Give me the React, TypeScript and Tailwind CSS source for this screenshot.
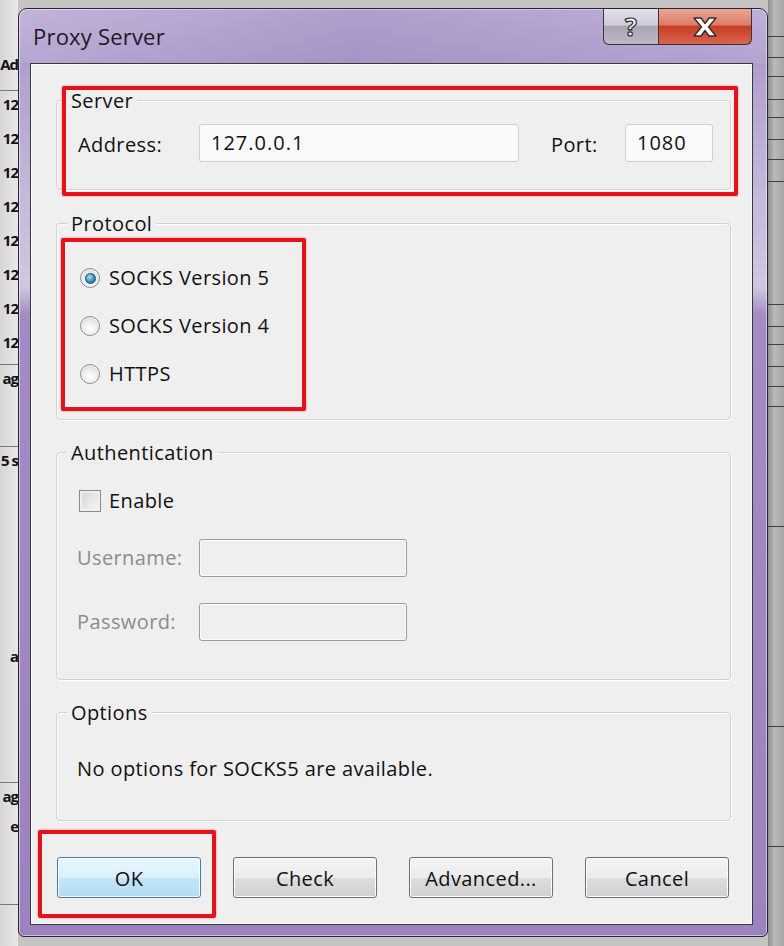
import type { ReactNode } from 'react';

const leftRows = [
  { h: 51, t: '' },
  { h: 40, t: 'Ad', line: true },
  { h: 34, t: '12' },
  { h: 34, t: '12' },
  { h: 34, t: '12' },
  { h: 34, t: '12' },
  { h: 34, t: '12' },
  { h: 34, t: '12' },
  { h: 34, t: '12' },
  { h: 36, t: '12', line: true },
  { h: 82, t: 'ag', line: true },
  { h: 196, t: '5 s' },
  { h: 140, t: 'a', line: true },
  { h: 30, t: 'ag' },
  { h: 92, t: 'e', line: true },
];

const rightRows = [37, 21, 19, 23, 18, 22, 20, 22, 123, 22, 18, 22, 20, 20, 120, 200, 120];

function Group({ label, className, children }: { label: string; className: string; children?: ReactNode }) {
  return (
    <div className={`ml-[25px] w-[675px] rounded-[4px] border border-[#d2d2d2] shadow-[inset_1px_1px_0_#ffffff,1px_1px_0_#ffffff] ${className}`}>
      <div className="-mt-[12px] ml-[10px] w-fit bg-[#efefef] px-[4px] text-[20px] leading-[24px] tracking-[0.4px] text-[#111]">{label}</div>
      {children}
    </div>
  );
}

function Radio({ checked }: { checked?: boolean }) {
  return (
    <span className="flex h-[20px] w-[20px] items-center justify-center rounded-full border border-[#8b8c8d] bg-[radial-gradient(circle_at_50%_65%,#ffffff,#d6d6d6)] shadow-[inset_0_0_0_1px_#f2f2f2]">
      {checked && (
        <span className="h-[11px] w-[11px] rounded-full border border-[#1b4f6d] bg-[radial-gradient(circle_at_40%_35%,#b4e4f6,#3290b8_55%,#1a5b7e)]" />
      )}
    </span>
  );
}

function Btn({ label, primary }: { label: string; primary?: boolean }) {
  return (
    <div
      className={`flex h-[41px] w-[144px] items-center justify-center rounded-[3px] border pt-[2px] text-[20px] tracking-[0.4px] text-[#111] shadow-[inset_0_0_0_1px_#fcfcfc] ${
        primary
          ? 'border-[#3c7fb1] bg-[linear-gradient(#eaf6fd_0%,#d9f0fc_50%,#c4e6f8_50%,#b2dcf2_100%)]'
          : 'border-[#707070] bg-[linear-gradient(#f4f4f4_0%,#ececec_50%,#dedede_50%,#d0d0d0_100%)]'
      }`}
    >
      {label}
    </div>
  );
}

export default function App() {
  return (
    <div className="relative flex h-[946px] w-[784px] overflow-hidden bg-[#c4c4c4] font-['Open_Sans',sans-serif]">
      {/* Desktop behind the dialog, left side */}
      <div className="flex w-[18px] flex-col overflow-hidden bg-[linear-gradient(to_right,#d6d6d6,#e8e8e8)]">
        {leftRows.map((r, i) => (
          <div
            key={i}
            className={`flex shrink-0 items-start justify-end whitespace-nowrap pt-[2px] text-[15px] font-bold leading-[22px] tracking-[-1px] text-[#111] ${r.line ? 'border-b border-[#777]' : ''}`}
            style={{ height: r.h }}
          >
            {r.t}
          </div>
        ))}
      </div>

      {/* Dialog window */}
      <div className="mt-[8px] flex h-[929px] w-[750px] shrink-0 flex-col rounded-t-[9px] rounded-b-[6px] border border-[#26242e] bg-[linear-gradient(#bcaed7_0%,#b09fcd_6%,#c4b9da_20%,#d0c7e0_30%,#a38bc5_33%,#9c83bf_100%)] shadow-[0_0_0_1px_rgba(255,255,255,0.5)_inset]">
        {/* Title bar */}
        <div className="flex h-[54px] shrink-0 items-start justify-between bg-[linear-gradient(to_right,rgba(255,255,255,0.08),rgba(120,90,160,0.18)_45%,rgba(255,255,255,0.04))]">
          <div className="pl-[14px] pt-[12px] text-[22px] leading-[30px] tracking-[0.2px] text-[#1c1a22]">Proxy Server</div>
          <div className="mr-[15px] flex h-[36px]">
            <div className="flex w-[56px] items-center justify-center rounded-bl-[6px] border border-t-0 border-[#36333f] bg-[linear-gradient(#e4e1ea_0%,#cfccd8_45%,#a9a5b4_50%,#bdb9c8_100%)] text-[25px] font-bold leading-none text-white [-webkit-text-stroke:1.2px_#2c2a33]">
              ?
            </div>
            <div className="flex w-[93px] items-center justify-center rounded-br-[6px] border border-l-0 border-t-0 border-[#36333f] bg-[linear-gradient(#eba595_0%,#dd7c68_45%,#c83c24_50%,#d8674c_100%)]">
              <svg width="34" height="22" viewBox="0 0 34 22">
                <path
                  d="M6 2 L13 2 L17 7.5 L21 2 L28 2 L20.5 11 L28 20 L21 20 L17 14.5 L13 20 L6 20 L13.5 11 Z"
                  fill="#ffffff"
                  stroke="#3a2a2a"
                  strokeWidth="1.4"
                  strokeLinejoin="round"
                />
              </svg>
            </div>
          </div>
        </div>

        {/* Client area */}
        <div className="ml-[11px] mr-[14px] mb-[11px] flex flex-1 flex-col border border-[#3a3744] bg-[#efefef] shadow-[inset_0_0_0_1px_#fafafa]">
          <Group label="Server" className="mt-[36px] h-[90px]">
            <div className="mt-[11px] flex h-[38px] items-center pl-[21px] text-[20px] tracking-[0.4px] text-[#111]">
              <span className="w-[121px] pt-[3px]">Address:</span>
              <div className="flex h-[38px] w-[320px] items-center rounded-[3px] border border-[#cfcfcf] bg-[#fafafa] pl-[11px] tracking-[1px]">127.0.0.1</div>
              <span className="ml-[32px] w-[74px] pt-[3px]">Port:</span>
              <div className="flex h-[38px] w-[88px] items-center rounded-[3px] border border-[#cfcfcf] bg-[#fafafa] pl-[11px] tracking-[1px]">1080</div>
            </div>
          </Group>

          <Group label="Protocol" className="mt-[33px] h-[197px]">
            <div className="mt-[18px] flex flex-col pl-[23px] text-[20px] tracking-[0.4px] text-[#111]">
              {['SOCKS Version 5', 'SOCKS Version 4', 'HTTPS'].map((p, i) => (
                <div key={p} className="flex h-[48px] items-center gap-[9px]">
                  <Radio checked={i === 0} />
                  <span>{p}</span>
                </div>
              ))}
            </div>
          </Group>

          <Group label="Authentication" className="mt-[32px] h-[228px]">
            <div className="mt-[18px] flex h-[36px] items-center gap-[8px] pl-[22px] text-[20px] tracking-[0.4px] text-[#111]">
              <span className="h-[22px] w-[22px] border border-[#8b8b8b] bg-[linear-gradient(135deg,#d4d4d4,#f7f7f7)] shadow-[inset_0_0_0_2px_#efefef]" />
              <span>Enable</span>
            </div>
            <div className="mt-[20px] flex h-[38px] items-center pl-[20px] text-[20px] tracking-[0.4px] text-[#8c8c8c]">
              <span className="w-[122px]">Username:</span>
              <div className="h-[38px] w-[208px] rounded-[3px] border border-[#9d9d9d] bg-[#efefef] shadow-[inset_0_0_0_1px_#fbfbfb]" />
            </div>
            <div className="mt-[26px] flex h-[38px] items-center pl-[20px] text-[20px] tracking-[0.4px] text-[#8c8c8c]">
              <span className="w-[122px]">Password:</span>
              <div className="h-[38px] w-[208px] rounded-[3px] border border-[#9d9d9d] bg-[#efefef] shadow-[inset_0_0_0_1px_#fbfbfb]" />
            </div>
          </Group>

          <Group label="Options" className="mt-[32px] h-[109px]">
            <div className="mt-[32px] pl-[20px] text-[20px] leading-[24px] tracking-[0.4px] text-[#111]">No options for SOCKS5 are available.</div>
          </Group>

          <div className="mt-[36px] flex gap-[32px] pl-[26px]">
            <Btn label="OK" primary />
            <Btn label="Check" />
            <Btn label="Advanced..." />
            <Btn label="Cancel" />
          </div>
        </div>
      </div>

      {/* Desktop behind the dialog, right side */}
      <div className="flex flex-1 flex-col bg-[linear-gradient(to_right,#8f8f8f,#b9b9b9_40%,#a6a6a6)]">
        {rightRows.map((h, i) => (
          <div key={i} className="shrink-0 border-b border-[#3e3e3e]" style={{ height: h }} />
        ))}
      </div>

      {/* Red highlight annotations */}
      <div className="pointer-events-none absolute left-[62px] top-[86px] h-[110px] w-[676px] rounded-[2px] border-[4px] border-[#e3121b] shadow-[0_0_2px_rgba(227,18,27,0.6)]" />
      <div className="pointer-events-none absolute left-[61px] top-[238px] h-[173px] w-[245px] rounded-[2px] border-[4px] border-[#e3121b] shadow-[0_0_2px_rgba(227,18,27,0.6)]" />
      <div className="pointer-events-none absolute left-[38px] top-[830px] h-[88px] w-[178px] rounded-[2px] border-[4px] border-[#e3121b] shadow-[0_0_2px_rgba(227,18,27,0.6)]" />
    </div>
  );
}
